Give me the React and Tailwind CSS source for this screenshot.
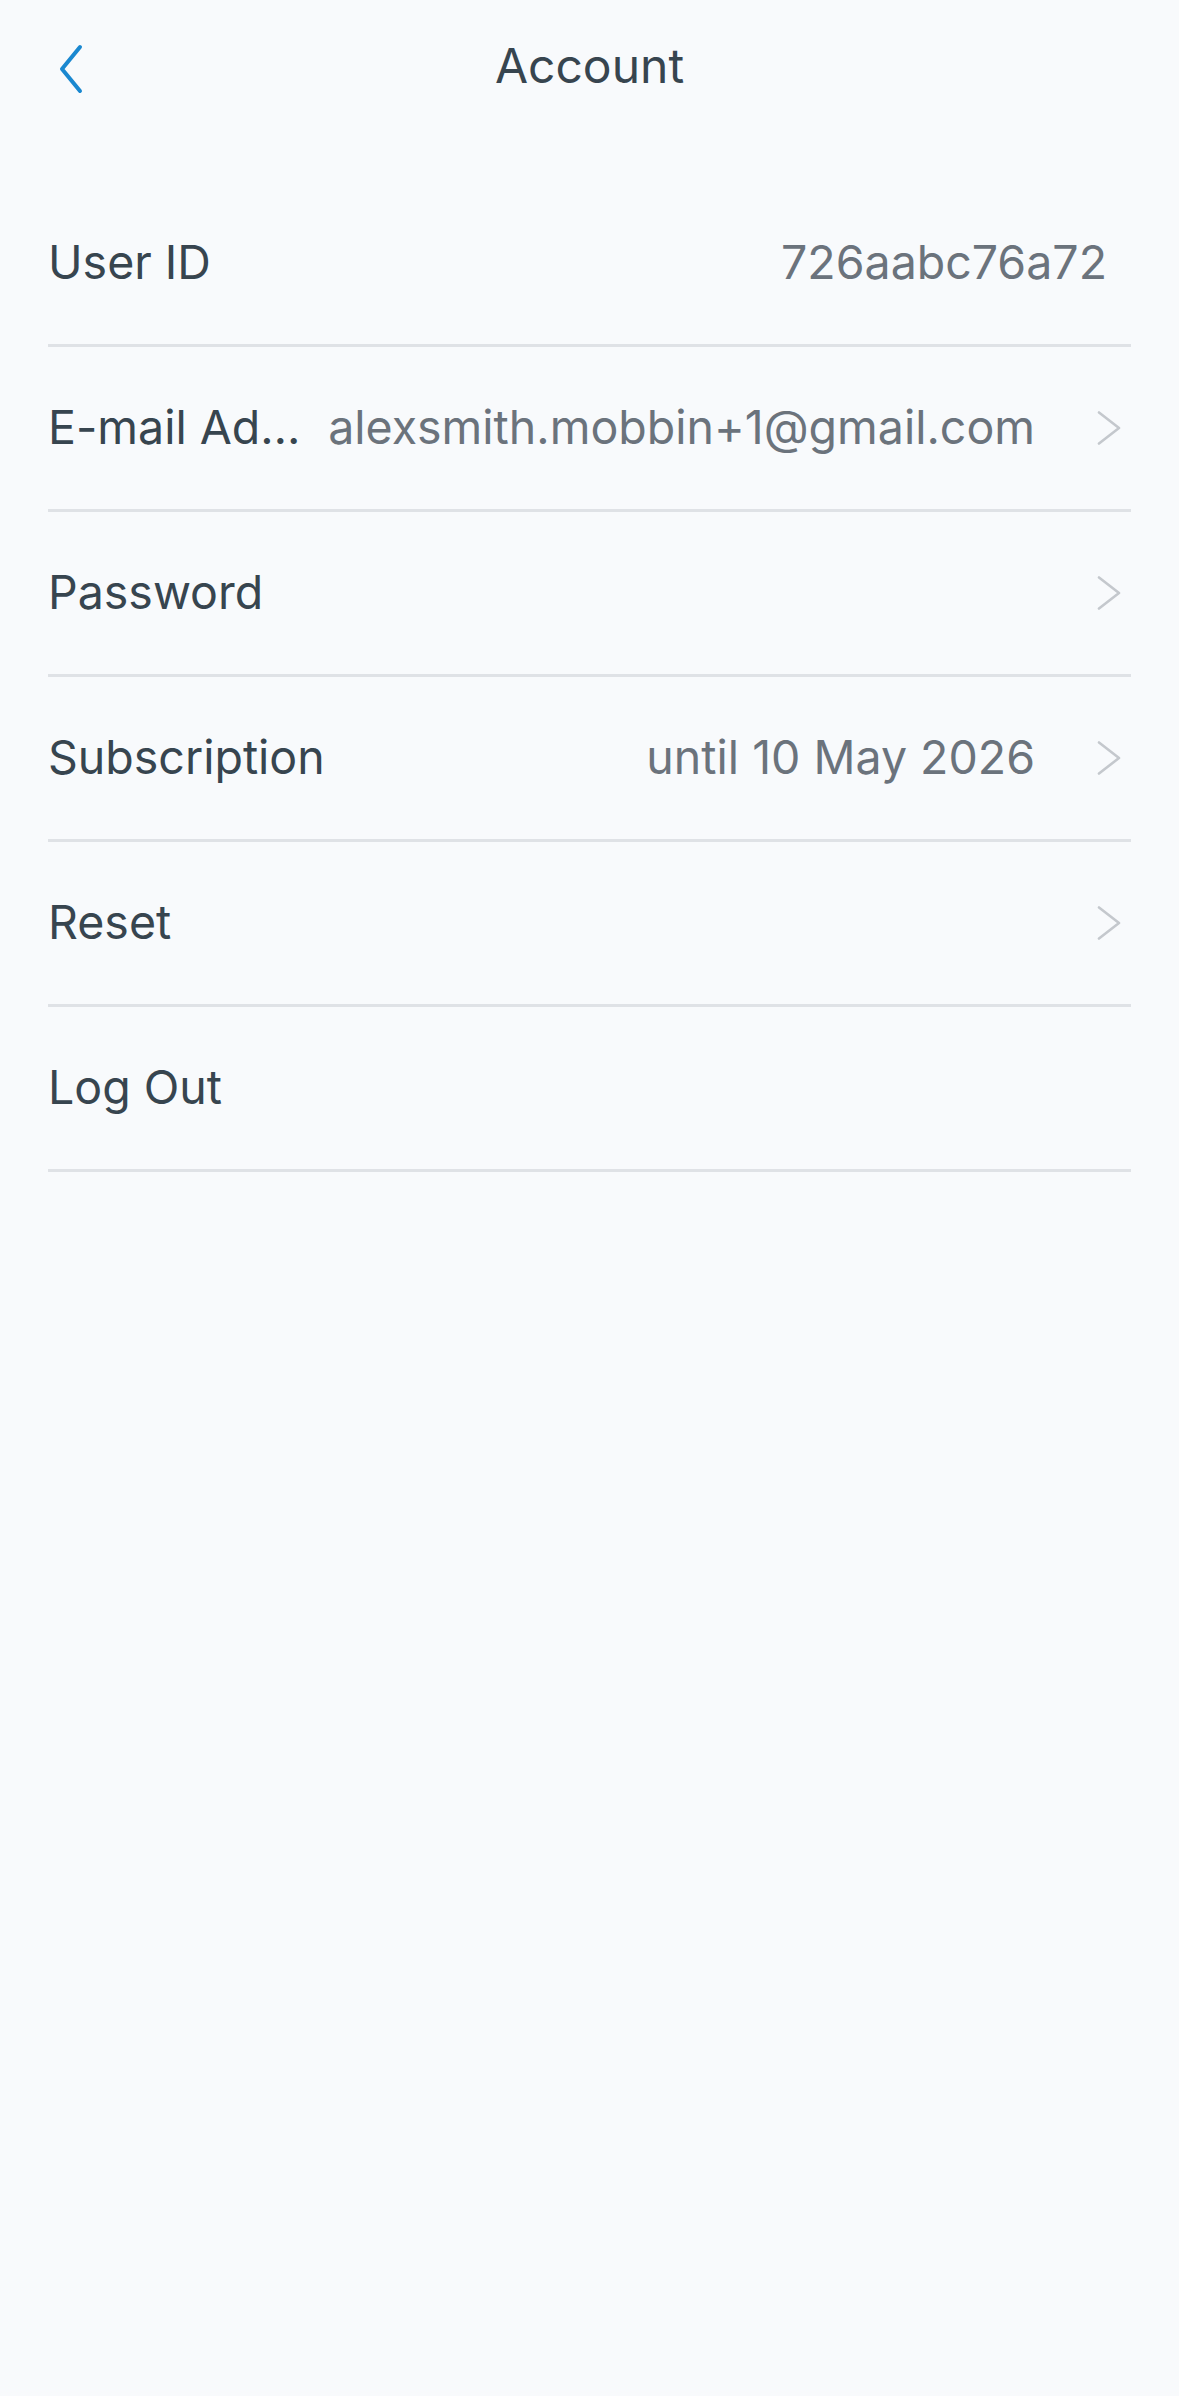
import React from 'react';

const rows = [
  { label: 'User ID', value: '726aabc76a72', chevron: false },
  { label: 'E-mail Address', value: 'alexsmith.mobbin+1@gmail.com', chevron: true },
  { label: 'Password', chevron: true },
  { label: 'Subscription', value: 'until 10 May 2026', chevron: true },
  { label: 'Reset', chevron: true },
  { label: 'Log Out', chevron: false },
];

function Chevron() {
  return (
    <svg width="24" height="34" viewBox="0 0 24 34" fill="none" className="shrink-0">
      <path d="M2 1.5 L22 17 L2 32.5" stroke="#c4c8cd" strokeWidth="2.6" strokeLinecap="round" strokeLinejoin="round" />
    </svg>
  );
}

function Row({ label, value, chevron }) {
  return (
    <div className="flex h-[165px] items-center border-b-[3px] border-[#dfe2e6]">
      <span className="min-w-0 flex-1 truncate leading-[1.4] text-[#37454f]">{label}</span>
      {value && (
        <span className={'shrink-0 pl-[26px] leading-[1.4] text-[#6b737c] ' + (chevron ? '' : 'pr-[24px]')}>{value}</span>
      )}
      {chevron && (
        <div className="ml-[62px] mr-[10px] flex shrink-0 items-center">
          <Chevron />
        </div>
      )}
    </div>
  );
}

export default function App() {
  return (
    <div className="min-h-[2396px] w-full bg-[#f8fafc] text-[46.5px] leading-none" style={{ fontFamily: 'Inter, "Noto Sans", sans-serif' }}>
      <header className="relative flex h-[132px] items-center justify-center">
        <button className="absolute left-[52px] top-[40px] p-[4px]">
          <svg width="28" height="50" viewBox="0 0 28 50" fill="none">
            <path d="M24 3 L6 25 L24 47" stroke="#1a88d0" strokeWidth="4" strokeLinecap="round" strokeLinejoin="round" />
          </svg>
        </button>
        <h1 className="text-[48px] font-normal leading-[1.4] text-[#37454f]">Account</h1>
      </header>
      <div className="mt-[50px] px-[48px]">
        {rows.map((r) => (
          <Row key={r.label} {...r} />
        ))}
      </div>
    </div>
  );
}
